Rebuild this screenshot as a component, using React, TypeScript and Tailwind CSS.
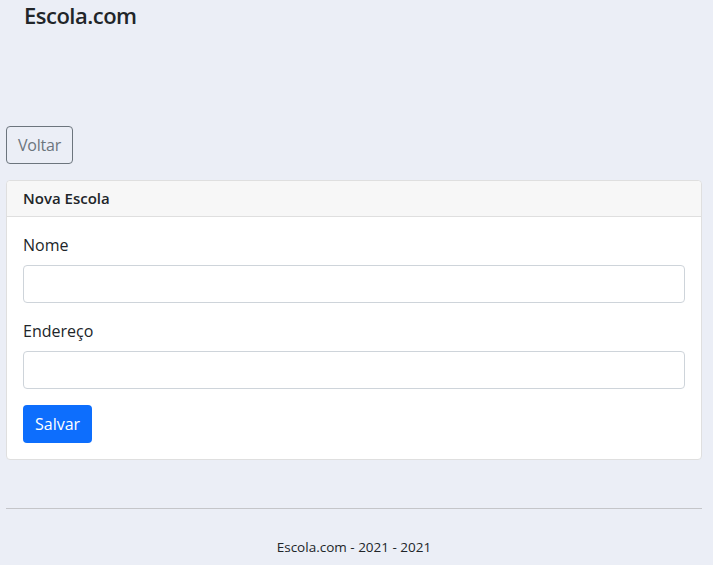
export default function App() {
  return (
    <div
      className="min-h-[565px] bg-[#ebeef6] text-[#212529] text-[16px]"
      style={{ fontFamily: '"Segoe UI", "Open Sans", "Noto Sans", sans-serif' }}
    >
      {/* Navbar */}
      <div className="px-[24px] h-[126px]">
        <span className="text-[22px] leading-[30px] font-semibold tracking-[-0.5px]">Escola.com</span>
      </div>

      <div className="px-[6px] w-[708px]">
        <button className="h-[38px] px-[11px] border border-[#6c757d] rounded-[4px] text-[#6c757d] leading-[24px] tracking-[-0.2px]">
          Voltar
        </button>

        {/* Card */}
        <div className="mt-[16px] bg-white border border-[#dfdfdf] rounded-[4px]">
          <div className="px-[16px] py-[8px] bg-[#f7f7f7] border-b border-[#dfdfdf] rounded-t-[4px] text-[15px] leading-[19px] font-semibold">
            Nova Escola
          </div>
          <div className="p-[16px]">
            <div className="mb-[16px]">
              <label className="block mb-[8px] leading-[24px]">Nome</label>
              <input className="block w-full h-[38px] px-[12px] border border-[#ced4da] rounded-[4px] bg-white" />
            </div>
            <div className="mb-[16px]">
              <label className="block mb-[8px] leading-[24px]">Endereço</label>
              <input className="block w-full h-[38px] px-[12px] border border-[#ced4da] rounded-[4px] bg-white" />
            </div>
            <button className="h-[38px] px-[12px] bg-[#0d6efd] text-white rounded-[4px] leading-[24px]">
              Salvar
            </button>
          </div>
        </div>

        {/* Footer */}
        <hr className="mt-[48px] border-t border-[#c4c5c9]" />
        <div className="pt-[28px] text-center text-[13.5px] leading-[20px]">Escola.com - 2021 - 2021</div>
      </div>
    </div>
  );
}
